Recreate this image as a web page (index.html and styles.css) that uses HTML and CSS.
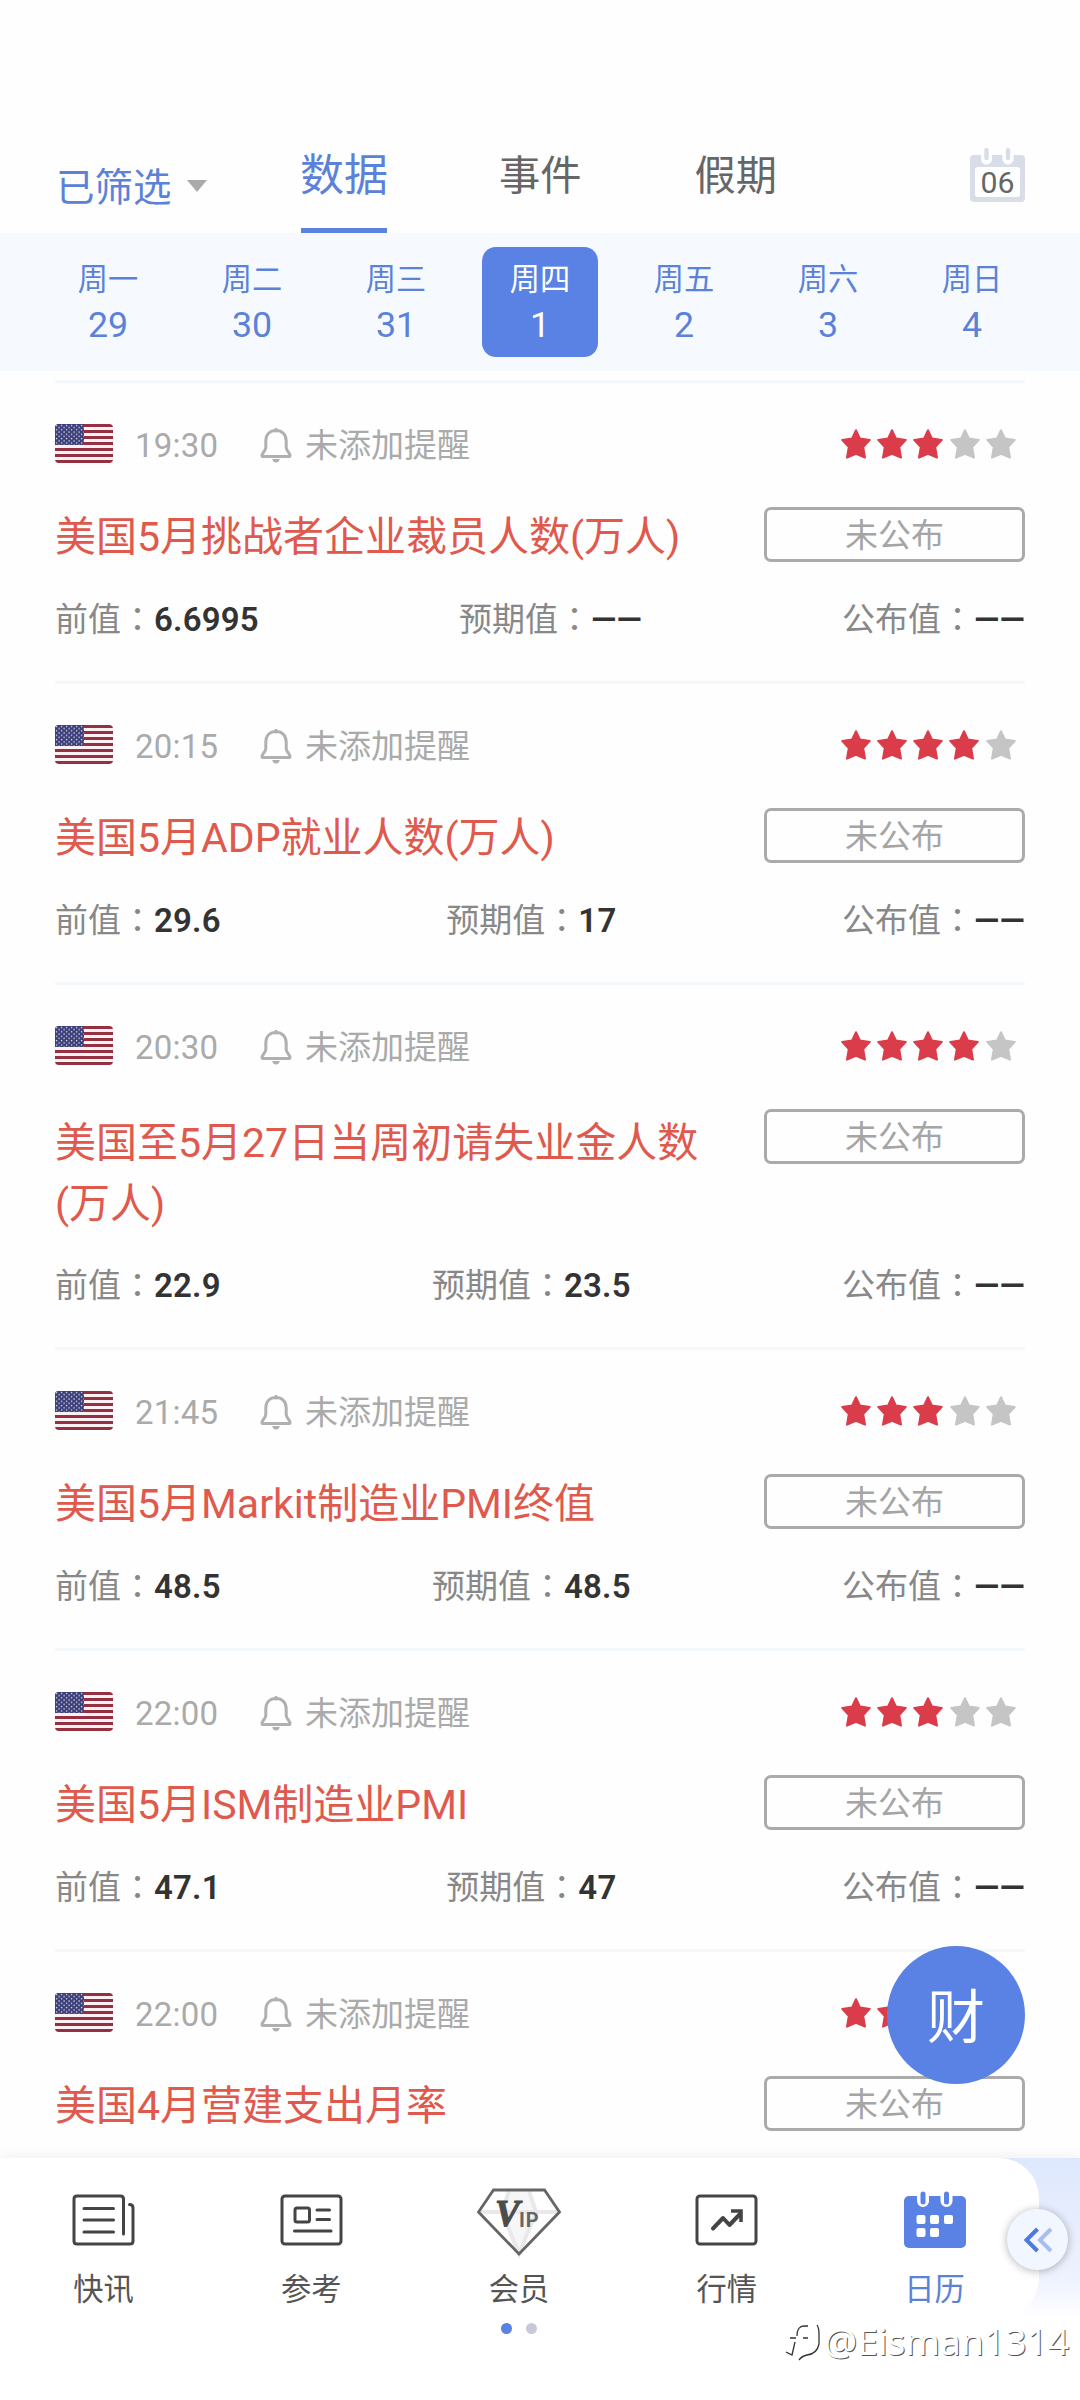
FILE: index.html
```
<!DOCTYPE html>
<html lang="zh-CN">
<head>
<meta charset="utf-8">
<title>日历</title>
<link rel="stylesheet" href="styles.css">
</head>
<body>
<svg class="defs" width="0" height="0">
  <defs>
    <pattern id="dots" width="5" height="4.4" patternUnits="userSpaceOnUse"><rect width="5" height="4.4" fill="#3c3f78"/><circle cx="1.6" cy="1.4" r=".8" fill="#d5d6ea"/><circle cx="4.1" cy="3.6" r=".8" fill="#d5d6ea"/></pattern>
    <symbol id="flag" viewBox="0 0 58 39">
      <rect width="58" height="39" fill="#fbf1f4"/>
      <path d="M0 1.5H58M0 7.5H58M0 13.5H58M0 19.5H58M0 25.5H58M0 31.5H58M0 37.5H58" stroke="#953040" stroke-width="3"/>
      <rect width="29" height="21" fill="url(#dots)"/>
    </symbol>
    <symbol id="bell" viewBox="0 0 32 36"><path d="M16 2.2V4M16 3.6C9.500 3.600 5.800 8 5.800 14V20.500C5.800 23.500 2 26 2 28.500Q2 29.600 3.500 29.600H28.500Q30 29.600 30 28.500C30 26 26.200 23.500 26.200 20.500V14C26.200 8 22.500 3.600 16 3.600Z" fill="none" stroke="#b0b0b0" stroke-width="3" stroke-linecap="round"/><path d="M12.200 32H19.800Q19 35.500 16 35.500T12.200 32Z" fill="#b0b0b0"/></symbol>
    <symbol id="star" viewBox="0 0 30 30"><path d="M15 1.200L19 9.600L28.800 10.900L22.200 18L24 28.600L15 24.800L6 28.600L7.800 18L1.200 10.900L11 9.600Z" fill="currentColor" stroke="currentColor" stroke-width="2" stroke-linejoin="round"/></symbol>
  </defs>
</svg>
<div class="screen">
  <header class="top">
    <div class="filter">已筛选<i class="caret"></i></div>
    <div class="tab on">数据</div>
    <div class="tab t2">事件</div>
    <div class="tab t3">假期</div>
    <div class="month">
      <svg width="55" height="54" viewBox="0 0 55 54"><rect y="7" width="55" height="47" rx="4" fill="#d9dde8"/><rect x="5" y="19" width="45" height="30" rx="3" fill="#fff"/><path d="M16.500 0V11M38 0V11" stroke="#fff" stroke-width="11" stroke-linecap="round"/><path d="M16.500 2V10M38 2V10" stroke="#d9dde8" stroke-width="4.400" stroke-linecap="round"/></svg>
      <span>06</span>
    </div>
  </header>
  <div class="week">
    <div class="day"><span>周一</span><b>29</b></div>
    <div class="day"><span>周二</span><b>30</b></div>
    <div class="day"><span>周三</span><b>31</b></div>
    <div class="day sel"><span>周四</span><b>1</b></div>
    <div class="day"><span>周五</span><b>2</b></div>
    <div class="day"><span>周六</span><b>3</b></div>
    <div class="day"><span>周日</span><b>4</b></div>
  </div>
  <main class="list">
    <article class="item">
      <div class="meta"><svg class="flag"><use href="#flag"/></svg><time>19:30</time><svg class="bell"><use href="#bell"/></svg><span class="remind">未添加提醒</span>
        <div class="stars"><svg><use href="#star"/></svg><svg><use href="#star"/></svg><svg><use href="#star"/></svg><svg class="off"><use href="#star"/></svg><svg class="off"><use href="#star"/></svg></div></div>
      <div class="main"><h2>美国5月挑战者企业裁员人数(万人)</h2><span class="state">未公布</span></div>
      <div class="vals"><p>前值<i lang="zh-TW">：</i><b>6.6995</b></p><p>预期值<i lang="zh-TW">：</i><b>——</b></p><p>公布值<i lang="zh-TW">：</i><b>——</b></p></div>
    </article>
    <article class="item">
      <div class="meta"><svg class="flag"><use href="#flag"/></svg><time>20:15</time><svg class="bell"><use href="#bell"/></svg><span class="remind">未添加提醒</span>
        <div class="stars"><svg><use href="#star"/></svg><svg><use href="#star"/></svg><svg><use href="#star"/></svg><svg><use href="#star"/></svg><svg class="off"><use href="#star"/></svg></div></div>
      <div class="main"><h2>美国5月ADP就业人数(万人)</h2><span class="state">未公布</span></div>
      <div class="vals"><p>前值<i lang="zh-TW">：</i><b>29.6</b></p><p>预期值<i lang="zh-TW">：</i><b>17</b></p><p>公布值<i lang="zh-TW">：</i><b>——</b></p></div>
    </article>
    <article class="item">
      <div class="meta"><svg class="flag"><use href="#flag"/></svg><time>20:30</time><svg class="bell"><use href="#bell"/></svg><span class="remind">未添加提醒</span>
        <div class="stars"><svg><use href="#star"/></svg><svg><use href="#star"/></svg><svg><use href="#star"/></svg><svg><use href="#star"/></svg><svg class="off"><use href="#star"/></svg></div></div>
      <div class="main"><h2 class="two">美国至5月27日当周初请失业金人数(万人)</h2><span class="state">未公布</span></div>
      <div class="vals"><p>前值<i lang="zh-TW">：</i><b>22.9</b></p><p>预期值<i lang="zh-TW">：</i><b>23.5</b></p><p>公布值<i lang="zh-TW">：</i><b>——</b></p></div>
    </article>
    <article class="item">
      <div class="meta"><svg class="flag"><use href="#flag"/></svg><time>21:45</time><svg class="bell"><use href="#bell"/></svg><span class="remind">未添加提醒</span>
        <div class="stars"><svg><use href="#star"/></svg><svg><use href="#star"/></svg><svg><use href="#star"/></svg><svg class="off"><use href="#star"/></svg><svg class="off"><use href="#star"/></svg></div></div>
      <div class="main"><h2>美国5月Markit制造业PMI终值</h2><span class="state">未公布</span></div>
      <div class="vals"><p>前值<i lang="zh-TW">：</i><b>48.5</b></p><p>预期值<i lang="zh-TW">：</i><b>48.5</b></p><p>公布值<i lang="zh-TW">：</i><b>——</b></p></div>
    </article>
    <article class="item">
      <div class="meta"><svg class="flag"><use href="#flag"/></svg><time>22:00</time><svg class="bell"><use href="#bell"/></svg><span class="remind">未添加提醒</span>
        <div class="stars"><svg><use href="#star"/></svg><svg><use href="#star"/></svg><svg><use href="#star"/></svg><svg class="off"><use href="#star"/></svg><svg class="off"><use href="#star"/></svg></div></div>
      <div class="main"><h2>美国5月ISM制造业PMI</h2><span class="state">未公布</span></div>
      <div class="vals"><p>前值<i lang="zh-TW">：</i><b>47.1</b></p><p>预期值<i lang="zh-TW">：</i><b>47</b></p><p>公布值<i lang="zh-TW">：</i><b>——</b></p></div>
    </article>
    <article class="item">
      <div class="meta"><svg class="flag"><use href="#flag"/></svg><time>22:00</time><svg class="bell"><use href="#bell"/></svg><span class="remind">未添加提醒</span>
        <div class="stars"><svg><use href="#star"/></svg><svg><use href="#star"/></svg></div></div>
      <div class="main"><h2>美国4月营建支出月率</h2><span class="state">未公布</span></div>
    </article>
  </main>
  <div class="fab">财</div>
  <div class="bar">
    <nav class="nav">
      <a><svg width="70" height="76" viewBox="0 0 70 76" fill="none" stroke="#444" stroke-width="3" stroke-linecap="round" stroke-linejoin="round"><path d="M54.500 58V23Q54.500 20 51.500 20H8Q5 20 5 23V65Q5 68 8 68H61Q64 68 64 65V32Q64 28.500 60.500 28.500M15 32.500H44.500M15 44H44.500M15 56H44.500"/></svg><span>快讯</span></a>
      <a><svg width="70" height="76" viewBox="0 0 70 76" fill="none" stroke="#444" stroke-width="3" stroke-linecap="round" stroke-linejoin="round"><rect x="5" y="20" width="59" height="48" rx="3"/><rect x="18" y="32" width="14.500" height="14" rx="2"/><path d="M40 34H52.500M40 43.500H52.500M17.500 55H54"/></svg><span>参考</span></a>
      <a><svg width="90" height="76" viewBox="0 0 90 76"><path d="M19.500 14H70.500L85.500 36L45 78L4.500 36Z" fill="#fff"/><path d="M35 15L28 36L45 78L62 36L55 15" fill="#f6f6f6"/><path d="M35 15L28 36L45 78L62 36L55 15M5 36H85" fill="none" stroke="#e9e9e9" stroke-width="4"/><path d="M19.500 14H70.500L85.500 36L45 78L4.500 36Z" fill="none" stroke="#666" stroke-width="2.800"/><text x="21" y="50" class="v">V</text><text x="45" y="51" class="ip">IP</text></svg><span>会员</span></a>
      <a><svg width="70" height="76" viewBox="0 0 70 76" fill="none" stroke="#444" stroke-width="3" stroke-linecap="round" stroke-linejoin="round"><rect x="5" y="20" width="59" height="48" rx="3"/><path d="M21 52.500L31 42L37.500 49L48 38" stroke-width="4"/><path d="M39 35H49V46" stroke-width="3.600" stroke-linecap="butt" stroke-linejoin="miter"/></svg><span>行情</span></a>
      <a class="cur"><svg width="70" height="76" viewBox="0 0 70 76"><rect x="4" y="20" width="62" height="52" rx="5" fill="#5a82e4"/><path d="M23 12V25M46.500 12V25" stroke="#fff" stroke-width="12" stroke-linecap="round"/><path d="M23 18V26M46.500 18V26" stroke="#5a82e4" stroke-width="5" stroke-linecap="round"/><g fill="#fff"><rect x="16.500" y="39" width="9" height="9" rx="2"/><rect x="30" y="39" width="9" height="9" rx="2"/><rect x="44" y="39" width="9" height="9" rx="2"/><rect x="16.500" y="52" width="9" height="9" rx="2"/><rect x="30" y="52" width="9" height="9" rx="2"/></g></svg><span>日历</span></a>
    </nav>
    <div class="pager"><i class="p1"></i><i></i></div>
    <div class="more"><svg width="30" height="26" viewBox="0 0 30 26" fill="none" stroke-width="4"><path d="M14.500 2L3.500 13L14.500 24" stroke="#4f79dc"/><path d="M28 2L17 13L28 24" stroke="#a9bdf0"/></svg></div>
    <div class="mark"><svg width="36" height="42" viewBox="0 0 36 42" fill="none" stroke="#333" stroke-width="1.300"><path d="M13 16Q13 6 20 6H24M33 5Q35 8 35 14V24Q33 34 23 35Q18 36 15 40M6 18H12M19 18H24M11 22L8 35L2 32" /></svg><span>@Eisman1314</span></div>
  </div>
</div>
</body>
</html>
```
FILE: styles.css
```
* { box-sizing: border-box; }
body { margin: 0; background: #fefefe; }
i { font-style: normal; }
.defs { position: absolute; }
.screen {
  position: relative;
  display: flex;
  flex-direction: column;
  width: 1080px;
  height: 2400px;
  overflow: hidden;
  font-family: Roboto, "Noto Sans CJK SC", sans-serif;
  color: #666;
}
.top { display: flex; height: 233px; padding: 118px 55px 0 56px; flex: none; }
.filter { display: flex; align-items: center; width: 245px; height: 132px; font-size: 38.5px; color: #5b82d8; }
.caret { margin: 4px 0 0 15px; border: 10px solid transparent; border-top: 12px solid #aaa; border-bottom: 0; }
.tab { height: 115px; line-height: 116px; font-size: 41.25px; white-space: nowrap; }
.tab.on { width: 86px; font-size: 44px; text-indent: -1px; color: #5b82d8; border-bottom: 5px solid #5a82e0; }
.t2 { margin-left: 112px; }
.t3 { margin-left: 113px; }
.month { position: relative; width: 55px; height: 54px; margin: 30px 0 0 auto; }
.month span { position: absolute; left: 0; top: 18px; width: 55px; text-align: center; font-size: 30.25px; line-height: 34px; }
.week { display: flex; height: 138px; flex: none; padding: 14px 36px; background: #f6faff; }
.day { flex: 1; display: flex; flex-direction: column; align-items: center; height: 110px; padding-top: 11px; color: #5b82d8; }
.day span { font-size: 30.25px; line-height: 44px; }
.day b { font-weight: 400; font-size: 35.75px; line-height: 46px; }
.day.sel { flex: none; width: 116px; margin: 0 14px; border-radius: 14px; background: #5a82e4; color: #fff; }
.list { padding: 9px 55px 0; flex: none; height: 1787px; overflow: hidden; }
.item { border-top: 3px solid #f5f8fa; }
.meta { display: flex; align-items: center; height: 124px; color: #aaa; font-size: 33px; }
.flag { width: 58px; height: 39px; border-radius: 4px; margin-top: -3px; }
time { width: 125px; margin-left: 22px; letter-spacing: .2px; }
.bell { width: 32px; height: 36px; margin: -1px 13px 0 0; }
.remind { margin-top: -4px; }
.stars { display: flex; gap: 6px; width: 184px; margin: -2px 0 0 auto; color: #db3c4a; }
.stars svg { width: 30px; height: 30px; flex: none; }
.stars .off { color: #c5c5c5; position: relative; left: 1px; }
.main { display: flex; justify-content: space-between; align-items: flex-start; }
h2 { margin: 0; width: 652px; padding-top: 2px; font-size: 41px; font-weight: 400; line-height: 57px; color: #df594d; }
h2.two { margin-bottom: -2px; padding-top: 4px; line-height: 60.5px; }
.state { width: 261px; height: 55px; border: 3px solid #aaa; border-radius: 7px; text-align: center; font-size: 33px; line-height: 51px; color: #a5a5a5; }
.vals { display: flex; justify-content: space-between; height: 115px; padding-top: 27px; font-size: 33px; line-height: 48px; color: #888; }
.vals p { margin: 0; white-space: nowrap; }
.vals i { font-family: "Noto Sans CJK TC", sans-serif; }
.vals b { font-family: Roboto, sans-serif; font-weight: 600; letter-spacing: .2px; color: #333; }
.fab { position: absolute; left: 887px; top: 1946px; width: 138px; height: 138px; border-radius: 50%; background: #5a82e4; color: #fff; font-size: 58px; line-height: 144px; text-align: center; }
.bar { position: relative; height: 242px; background: linear-gradient(#dee8fd, #eef2fe 50%, #fff 159px); box-shadow: 0 -2px 12px rgba(0,0,0,.06); }
.nav { display: flex; width: 1039px; height: 160px; border-radius: 0 40px 40px 0; background: #fff; padding-top: 18px; }
.nav a { flex: 1; display: flex; flex-direction: column; align-items: center; font-size: 30.25px; color: #555; }
.nav svg { overflow: visible; flex: none; }
.nav span { line-height: 44px; margin: 16px 1px 0 0; }
.nav .cur { color: #5b82d8; }
.v { font: italic 700 37px "Liberation Serif", serif; fill: #4c4c4c; stroke: #4c4c4c; stroke-width: 1.2px; }
.ip { font: 700 20px Roboto, sans-serif; fill: #666; letter-spacing: 1px; }
.pager { display: flex; justify-content: center; gap: 14px; width: 1038px; padding-top: 5px; }
.pager i { width: 11px; height: 11px; border-radius: 50%; background: #c5c9da; }
.pager .p1 { background: #5a82e4; }
.more { position: absolute; left: 1007px; top: 51px; width: 61px; height: 61px; display: flex; align-items: center; justify-content: center; border-radius: 50%; background: #f2f6ff; box-shadow: 0 1px 8px rgba(0,0,0,.3); }
.mark { position: absolute; right: 11px; top: 159px; display: flex; align-items: center; gap: 4px; height: 48px; font: 37.2px/48px "Noto Sans", sans-serif; color: #fff; text-shadow: 1px 1px 0 #555; }
```
